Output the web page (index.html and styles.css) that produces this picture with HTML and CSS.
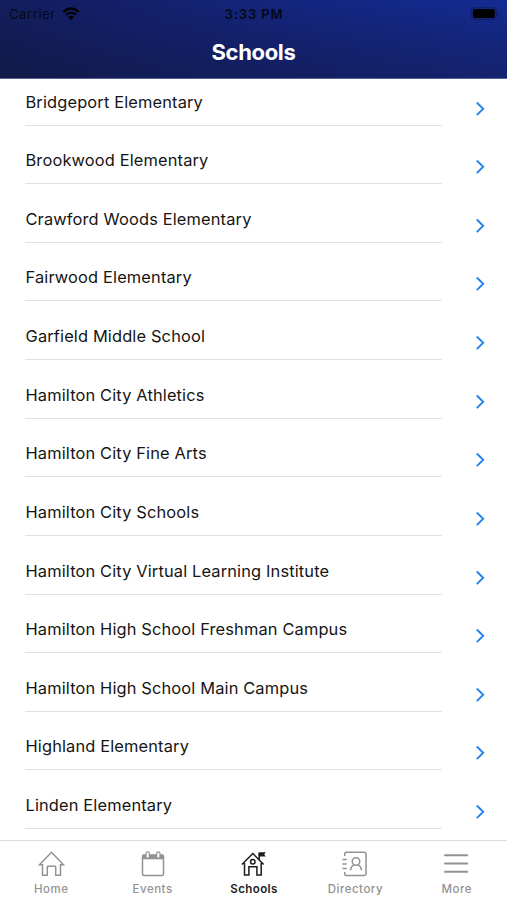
FILE: index.html
```html
<!DOCTYPE html>
<html lang="en">
    <head>
        <meta charset="utf-8">
        <title>Schools</title>
        <link rel="stylesheet" href="styles.css">
    </head>
    <body>
        <svg class="defs" width="0" height="0">
            <symbol id="chevron" viewBox="0 0 10 16">
                <path d="M1.8 1.5 L8.2 7.8 L1.8 14.1"/>
            </symbol>
        </svg>
        <div id="container">
            <header>
                <div class="status">
                    <div class="carrier">
                        <span>Carrier</span>
                        <svg width="18" height="13" viewBox="0 0 18 13">
                            <path d="M1.3 5 Q9 -2 16.7 5" fill="none" stroke="#000" stroke-width="2.3"/>
                            <path d="M4 7.8 Q9 3.3 14 7.8" fill="none" stroke="#000" stroke-width="2.1"/>
                            <path d="M6.1 10 Q9 7.5 11.9 10 L9 13 Z"/>
                        </svg>
                    </div>
                    <span class="time">3:33 PM</span>
                    <div class="battery">
                        <svg width="29" height="13" viewBox="0 0 29 13">
                            <rect x="1.2" y=".7" width="25" height="11.6" rx="3.2" fill="none" stroke="#000" stroke-opacity=".3"/>
                            <rect x="2.8" y="2" width="22" height="9" rx="2"/>
                            <path d="M27.4 4.5 Q29 6.5 27.4 8.5 Z" fill-opacity=".4"/>
                        </svg>
                    </div>
                </div>
                <h1>Schools</h1>
            </header>
            <main>
                <ul class="schools">
                    <li><span>Bridgeport Elementary</span><svg class="chevron"><use href="#chevron"/></svg></li>
                    <li><span>Brookwood Elementary</span><svg class="chevron"><use href="#chevron"/></svg></li>
                    <li><span>Crawford Woods Elementary</span><svg class="chevron"><use href="#chevron"/></svg></li>
                    <li><span>Fairwood Elementary</span><svg class="chevron"><use href="#chevron"/></svg></li>
                    <li><span>Garfield Middle School</span><svg class="chevron"><use href="#chevron"/></svg></li>
                    <li><span>Hamilton City Athletics</span><svg class="chevron"><use href="#chevron"/></svg></li>
                    <li><span>Hamilton City Fine Arts</span><svg class="chevron"><use href="#chevron"/></svg></li>
                    <li><span>Hamilton City Schools</span><svg class="chevron"><use href="#chevron"/></svg></li>
                    <li><span>Hamilton City Virtual Learning Institute</span><svg class="chevron"><use href="#chevron"/></svg></li>
                    <li><span>Hamilton High School Freshman Campus</span><svg class="chevron"><use href="#chevron"/></svg></li>
                    <li><span>Hamilton High School Main Campus</span><svg class="chevron"><use href="#chevron"/></svg></li>
                    <li><span>Highland Elementary</span><svg class="chevron"><use href="#chevron"/></svg></li>
                    <li><span>Linden Elementary</span><svg class="chevron"><use href="#chevron"/></svg></li>
                </ul>
            </main>
            <nav>
                <a class="tab">
                    <svg viewBox="0 0 28 28">
                        <path d="M2.5 14.8 L14.5 2.3 L26.5 14.8 H23.5 V25.2 H18.7 V17 Q18.7 16.3 18 16.3 H11 Q10.3 16.3 10.3 17 V25.2 H5.5 V14.8 Z"/>
                    </svg>
                    <span>Home</span>
                </a>
                <a class="tab">
                    <svg viewBox="0 0 28 28">
                        <rect x="4.5" y="5" width="21" height="20.5" rx="1.5"/>
                        <path class="solid" d="M4.5 4.8 H25.5 V9.3 H4.5 Z"/>
                        <rect class="ring" x="8" y="1.8" width="3.4" height="6.4" rx="1.7"/>
                        <rect class="ring" x="18.6" y="1.8" width="3.4" height="6.4" rx="1.7"/>
                    </svg>
                    <span>Events</span>
                </a>
                <a class="tab active">
                    <svg viewBox="0 0 28 28">
                        <path d="M1.9 14.5 L12.8 3.5 L23.7 14.5 M4.5 13 V25 H8.9 V16.8 H16.9 V25 H21.2 V13 M19.2 9.8 V3"/>
                        <circle cx="12.8" cy="11.8" r="2.3"/>
                        <path class="solid" d="M18.7 2.3 H25.8 L24.2 4.4 L25.8 6.6 H18.7 Z"/>
                    </svg>
                    <span>Schools</span>
                </a>
                <a class="tab">
                    <svg viewBox="0 0 28 28">
                        <path d="M3.7 6 V4 Q3.7 2.3 5.4 2.3 H23.3 Q25 2.3 25 4 V23.8 Q25 25.5 23.3 25.5 H5.4 Q3.7 25.5 3.7 23.8 V22"/>
                        <path d="M1.4 9.5 H5.7 M1.4 14 H5.7 M1.4 18.5 H5.7"/>
                        <circle cx="15" cy="11.5" r="3.8"/>
                        <path d="M9.6 20.2 Q9.6 16.5 12.9 15.1 M17.1 15.1 Q20.4 16.5 20.4 20.2"/>
                    </svg>
                    <span>Directory</span>
                </a>
                <a class="tab">
                    <svg viewBox="0 0 28 28">
                        <path class="bars" d="M3 5.3 H25.2 M3 13.5 H25.2 M3 21.8 H25.2"/>
                    </svg>
                    <span>More</span>
                </a>
            </nav>
        </div>
    </body>
</html>
```
FILE: styles.css
```css
body {
    margin: 0;
    font-family: Inter, "Liberation Sans", sans-serif;
    background-color: white;
}

.defs {
    position: absolute;
}

#container {
    display: flex;
    flex-direction: column;
    height: 900px;
}

/* title bar */
header {
    flex: 0 0 79px;
    box-sizing: border-box;
    background: linear-gradient(170deg, transparent 30%, rgba(19, 27, 70, 0.35) 100%), linear-gradient(22deg, #111a48 0%, #13206a 45%, #142d9b 100%);
    border-bottom: 1px solid #56639c;
}

.status {
    display: grid;
    grid-template-columns: 1fr auto 1fr;
    align-items: center;
    height: 27px;
    padding: 0 8px 0 9px;
    font-size: 13px;
    color: #050817;
}

.carrier {
    display: flex;
    align-items: center;
    gap: 6px;
    letter-spacing: 0.6px;
}

.time {
    font-weight: 600;
    letter-spacing: 0.9px;
}

.battery {
    display: flex;
    justify-content: flex-end;
}

h1 {
    margin: 11px 0 0;
    font-size: 22px;
    line-height: 28px;
    font-weight: 700;
    letter-spacing: -0.35px;
    text-align: center;
    color: white;
}

/* school list, scrolled a little under the title bar */
main {
    flex: 1;
    overflow: hidden;
}

.schools {
    list-style: none;
    margin: -12.1px 0 0;
    padding: 0 22px 0 25px;
}

.schools li {
    display: flex;
    justify-content: space-between;
    height: 58.63px;
}

.schools span {
    width: 417px;
    box-sizing: border-box;
    padding: 24.7px 0 0 0.5px;
    font-size: 16.4px;
    line-height: 20px;
    letter-spacing: 0.15px;
    color: #151515;
    border-bottom: 1.5px solid #e2e2e2;
}

.chevron {
    width: 10px;
    height: 16px;
    margin-top: 33.7px;
    fill: none;
    stroke: #2484ee;
    stroke-width: 1.9;
}

/* tab bar */
nav {
    display: flex;
    flex: 0 0 60px;
    box-sizing: border-box;
    border-top: 1px solid #dcdcdc;
    background-color: white;
}

.tab {
    flex: 1;
    display: flex;
    flex-direction: column;
    align-items: center;
    padding-top: 9px;
    color: #929292;
    font-size: 11.5px;
    font-weight: 500;
    line-height: 16px;
    letter-spacing: 0.5px;
}

.tab svg {
    width: 28px;
    height: 28px;
    margin-bottom: 3px;
    fill: none;
    stroke: currentColor;
    stroke-width: 1.5;
}

.tab span {
    padding-left: 1px;
}

.tab .solid {
    fill: currentColor;
    stroke: none;
}

.tab .ring {
    fill: white;
    stroke-width: 1.2;
}

.tab .bars {
    stroke-width: 2;
    stroke-linecap: round;
}

.tab.active {
    color: #1c1c1c;
    font-weight: 600;
    letter-spacing: 0.4px;
}
```
